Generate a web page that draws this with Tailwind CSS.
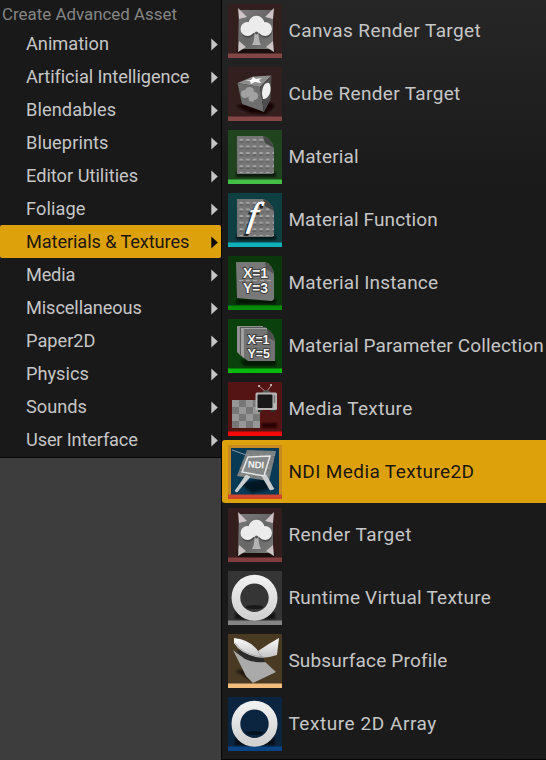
<!DOCTYPE html>
<html lang="en">
<head>
<meta charset="utf-8">
<title>Create Advanced Asset</title>
<script src="https://cdn.jsdelivr.net/npm/@tailwindcss/browser@4"></script>
</head>
<body class="w-[546px] h-[760px] overflow-hidden bg-[#3d3d3d] font-['Roboto',sans-serif] text-[#c6c6c6]">
<svg class="absolute w-0 h-0">
  <defs>
    <linearGradient id="stone" x1="0" y1="0" x2="1" y2="1"><stop offset="0" stop-color="#7c7c7c"/><stop offset=".5" stop-color="#666"/><stop offset="1" stop-color="#7a7a7a"/></linearGradient>
    <linearGradient id="ringFill" x1="0" y1="0" x2="0" y2="1"><stop offset="0" stop-color="#f0f0f0"/><stop offset="1" stop-color="#d2d2d2"/></linearGradient>
    <linearGradient id="white" x1="0" y1="0" x2="0" y2="1"><stop offset="0" stop-color="#fafafa"/><stop offset="1" stop-color="#c4c4c4"/></linearGradient>
    <pattern id="dots" width="6.600" height="6.600" patternUnits="userSpaceOnUse" x="10" y="7"><rect x="1.500" y="2" width="3.600" height="2" fill="#a8a8a8"/><rect x="1.500" y="4" width="3.600" height="1.500" fill="#5c5c5c"/></pattern>
    <pattern id="checks" width="14" height="14" patternUnits="userSpaceOnUse" x="4" y="18"><rect width="14" height="14" fill="#969696"/><path d="M7 0h7v7H7zM0 7h7v7H0z" fill="#777"/></pattern>
    <filter id="soft" x="-20%" y="-20%" width="140%" height="140%"><feGaussianBlur stdDeviation="1.3"/></filter>
    <filter id="fine" x="-10%" y="-10%" width="120%" height="120%"><feGaussianBlur stdDeviation=".4"/></filter>
  </defs>
  <symbol id="tree" viewBox="0 0 54 54">
    <path d="M10 44h36v6H10z" fill="#150808" filter="url(#soft)"/>
    <path d="M11 6H45V43L43 45H12L10 43z" fill="url(#stone)"/>
    <g filter="url(#fine)"><path d="M10 4l9 9-8 2zM46 4l-9 9 8 2zM10 48l8-5-7-6zM46 48l-8-5 7-6z" fill="#cdc5c5"/>
    <g fill="#4c4c4c" transform="translate(.5 1.800)"><circle cx="19.500" cy="25" r="7"/><circle cx="28.500" cy="19.500" r="7.800"/><circle cx="37" cy="25" r="7"/><path d="M20 22h17v7H20z"/></g>
    <g fill="#ececec"><circle cx="19.500" cy="25" r="7"/><circle cx="28.500" cy="19.500" r="7.800"/><circle cx="37" cy="25" r="7"/><path d="M20 22h17v7H20z"/></g>
    <path d="M26.500 28h4q0 9 2.500 13h-9q2.500-4 2.500-13z" fill="#b4b4b4"/></g>
    <circle cx="28.500" cy="29" r="1.500" fill="#555"/>
  </symbol>
  <symbol id="cube" viewBox="0 0 54 54">
    <path d="M8 39L36 32 47 39 38 47 22 46z" fill="#120606" filter="url(#soft)"/>
    <path d="M9.500 16L25 9.500 43.500 8.500 32 20z" fill="#8e8e8e"/>
    <path d="M9.500 16L32 20 36 45 14 37z" fill="#6e6e6e"/>
    <path d="M32 20L43.500 8.500 42.500 33 36 45z" fill="#4e4e4e"/>
    <path d="M17 14l6-1 2-3 3 2 6-1-3 2 2 3-6-1-4 2-1-3z" fill="#fff" filter="url(#fine)"/>
    <g fill="#a2a2a2" filter="url(#fine)"><circle cx="17" cy="27" r="4"/><circle cx="21.500" cy="24.500" r="4.500"/><circle cx="26" cy="29" r="4"/><path d="M20 27h4l2 8-5-1z"/></g>
    <path d="M34 27c0-7 3-12 7-11 4 6 0 17-6 16z" fill="#f0f0f0" filter="url(#fine)"/>
  </symbol>
  <symbol id="sheet" viewBox="0 0 54 54">
    <path d="M8 42h40v5H8z" fill="#000" opacity=".6" filter="url(#soft)"/>
    <path d="M9 6H35Q43 8 46 18V43L44 44H9z" fill="#767676"/>
    <path d="M10 7H34L46 19V43H10z" fill="url(#dots)"/>
    <path d="M35 6l2 7 9 5q-3-10-11-12z" fill="#454845"/>
  </symbol>
  <symbol id="plain" viewBox="0 0 54 54">
    <path d="M8 43h40v5H8z" fill="#000" opacity=".6" filter="url(#soft)"/>
    <path d="M8 6H37Q44 8 46 18V43L44 45 9 42z" fill="#787878"/>
    <path d="M37 6l1 7 8 5q-2-10-9-12z" fill="#535353"/>
    <path d="M11 24.500h33" stroke="#a5a5a5" stroke-dasharray="4 3"/>
  </symbol>
  <symbol id="stack" viewBox="0 0 54 54">
    <path d="M12 41h36v6H16z" fill="#000" opacity=".6" filter="url(#soft)"/>
    <path d="M9 7h26v30H13l-4-4z" fill="#909090"/><path d="M12 8h26v31H15l-3-3z" fill="#5c5c5c"/><path d="M13 9h26v30H16l-3-3z" fill="#a0a0a0"/>
    <path d="M16 10h23q7 4 8 12v20H20l-4-3z" fill="#727272"/><path d="M39 10l1 9 7 3q-2-9-8-12z" fill="#505050"/>
  </symbol>
  <symbol id="tv" viewBox="0 0 54 54">
    <path d="M34 41h15v5H34z" fill="#250303" filter="url(#soft)"/>
    <path d="M4 18h28v28H4z" fill="url(#checks)"/>
    <path d="M38 10L31 4M38 10l5-6" stroke="#b88" stroke-width="1"/><circle cx="31" cy="4" r="1" fill="#ddd"/><circle cx="43" cy="3" r="1" fill="#ddd"/>
    <path d="M34 11c1-4 8-4 9 0z" fill="#555"/>
    <rect x="27.500" y="10.500" width="21.500" height="17.500" rx="1.500" fill="#b4b4b4"/><rect x="29.500" y="12.500" width="15" height="13.500" rx="1" fill="#181818"/>
    <path d="M46.500 13v8" stroke="#777" stroke-width="1.500"/><path d="M30 28h4v2h-4zM43 28h4v2h-4z" fill="#333"/>
  </symbol>
  <symbol id="ndi" viewBox="0 0 54 54">
    <path d="M3 3H51V50H3z" fill="#083a56"/>
    <path d="M11 38L36 34 47 43 24 48z" fill="#001524" filter="url(#soft)"/>
    <path d="M4 5l17 6" stroke="#8a9ba5"/>
    <path d="M19 5L48 6 41 36 9 31z" fill="#7c8080"/>
    <path d="M19 5L48 6 41 36 9 31z" fill="url(#dots)" opacity=".3"/>
    <path d="M20 12L42 11 36 31 14 27z" fill="#858989" stroke="#e6e6e6" stroke-width="1.500"/>
    <path d="M18 30L7 46l2 1 13-15zM34 31l8 14 4-1-8-14z" fill="#c9cdcf" stroke="#e4e8e8" stroke-width=".6"/>
  </symbol>
  <symbol id="ring" viewBox="0 0 54 54">
    <path d="M7 41q20 10 40 0v7H7z" fill="#000" opacity=".65" filter="url(#soft)"/>
    <ellipse cx="26.500" cy="36" rx="9" ry="2" fill="#000" opacity=".5" filter="url(#fine)"/>
    <circle cx="26.500" cy="26.800" r="18.600" fill="none" stroke="url(#ringFill)" stroke-width="8.800"/>
  </symbol>
  <symbol id="profile" viewBox="0 0 54 54">
    <path d="M7 37l17 10-7-12z" fill="#15100a" opacity=".8" filter="url(#soft)"/>
    <path d="M5 16q10 10 31 11L48 38 25 49 18 42z" fill="#aaa"/>
    <path d="M8 16q8 14 29 12L34 21z" fill="#292929" filter="url(#fine)"/>
    <path d="M6 4q17 2 24 13 10-7 21-13l-2 17q-12 4-21 2Q12 19 6 9z" fill="url(#white)"/>
    <path d="M7 9q8 12 28 14-4-2-5-6" fill="none" stroke="#999" stroke-width=".7"/>
  </symbol>
  <symbol id="arrow" viewBox="0 0 7 13"><path d="M.3.500L6.800 6.500.3 12.500z" fill="currentColor"/></symbol>
</svg>
<div class="flex items-start h-[760px]">
  <nav class="w-[221px] h-[458px] shrink-0 bg-[#191919] border-b border-[#050505]">
    <h1 class="h-[27px] pl-[2px] leading-[29px] text-[16.9px] text-[#858585] whitespace-nowrap">Create Advanced Asset</h1>
    <ul class="text-[18.2px] leading-[33px] whitespace-nowrap [&>li]:flex [&>li]:items-center [&>li]:justify-between [&>li]:h-[33px] [&>li]:pl-[26px] [&>li]:pr-[3px] [&_svg]:w-[7px] [&_svg]:h-[13px] [&_svg]:mt-px">
      <li><span>Animation</span><svg><use href="#arrow"/></svg></li>
      <li><span class="tracking-[-0.08px]">Artificial Intelligence</span><svg><use href="#arrow"/></svg></li>
      <li><span class="tracking-[0.1px]">Blendables</span><svg><use href="#arrow"/></svg></li>
      <li><span class="tracking-[0.1px]">Blueprints</span><svg><use href="#arrow"/></svg></li>
      <li><span>Editor Utilities</span><svg><use href="#arrow"/></svg></li>
      <li><span class="tracking-[0.1px]">Foliage</span><svg><use href="#arrow"/></svg></li>
      <li class="bg-[#dda20b] text-[#1c1607] rounded-[2px]"><span class="tracking-[-0.1px]">Materials &amp; Textures</span><svg class="text-[#0c0900]"><use href="#arrow"/></svg></li>
      <li><span class="tracking-[-0.2px]">Media</span><svg><use href="#arrow"/></svg></li>
      <li><span class="tracking-[-0.1px]">Miscellaneous</span><svg><use href="#arrow"/></svg></li>
      <li><span>Paper2D</span><svg><use href="#arrow"/></svg></li>
      <li><span>Physics</span><svg><use href="#arrow"/></svg></li>
      <li><span>Sounds</span><svg><use href="#arrow"/></svg></li>
      <li><span class="tracking-[-0.15px]">User Interface</span><svg><use href="#arrow"/></svg></li>
    </ul>
  </nav>
  <main class="w-[325px] h-[760px] overflow-hidden border-l border-b border-[#050505] bg-linear-to-b from-[#262626] via-[#1a1a1a] via-25% to-[#1a1a1a]">
    <ul class="-mt-px whitespace-nowrap text-[19px] leading-[24px] [&>li]:flex [&>li]:items-center [&>li]:gap-[6px] [&>li]:h-[63px] [&>li]:pl-[6px] [&_svg]:w-[54px] [&_svg]:h-[54px] [&_svg]:shrink-0 [&_svg]:mt-px [&_span]:pl-[0.4px]">
      <li><svg viewBox="0 0 54 54" class="bg-[#341f1f] text-[#844545]"><use href="#tree"/><path d="M0 49.500h54V54H0z" fill="currentColor"/></svg><span class="tracking-[0.4px]">Canvas Render Target</span></li>
      <li><svg viewBox="0 0 54 54" class="bg-[#341f1f] text-[#844545]"><use href="#cube"/><path d="M0 49.500h54V54H0z" fill="currentColor"/></svg><span class="tracking-[0.35px]">Cube Render Target</span></li>
      <li><svg viewBox="0 0 54 54" class="bg-[#1f441e] text-[#43bf43]"><use href="#sheet"/><path d="M0 49.500h54V54H0z" fill="currentColor"/></svg><span class="tracking-[0.15px]">Material</span></li>
      <li><svg viewBox="0 0 54 54" class="bg-[#0d3f43] text-[#0fb0b8]"><use href="#sheet"/><path d="M0 49.500h54V54H0z" fill="currentColor"/><g transform="translate(19 33) skewX(-9)" font-size="34" font-style="italic" class="font-['Liberation_Serif',serif]"><text x="-1" y="1.500" fill="#222" stroke="#222" stroke-width="2" filter="url(#fine)">f</text><text fill="#fff" stroke="#fff" stroke-width=".9">f</text></g></svg><span class="tracking-[0.13px]">Material Function</span></li>
      <li><svg viewBox="0 0 54 54" class="bg-[#0a370b] text-[#058c05]"><use href="#plain"/><path d="M0 49.500h54V54H0z" fill="currentColor"/><g class="font-['Liberation_Sans',sans-serif]" font-weight="bold" font-size="14" fill="#f4f4f4" stroke="#333" stroke-width="1.600" paint-order="stroke"><text x="15" y="22" textLength="25">X=1</text><text x="15" y="37" textLength="25">Y=3</text></g></svg><span class="tracking-[0.2px]">Material Instance</span></li>
      <li><svg viewBox="0 0 54 54" class="bg-[#0a400b] text-[#06b90a]"><use href="#stack"/><path d="M0 49.500h54V54H0z" fill="currentColor"/><g class="font-['Liberation_Sans',sans-serif]" font-weight="bold" font-size="12.500" fill="#f4f4f4" stroke="#333" stroke-width="1.600" paint-order="stroke"><text x="19.500" y="24.500" textLength="22">X=1</text><text x="19.500" y="39" textLength="22.500">Y=5</text></g></svg><span class="tracking-[0.14px]">Material Parameter Collection</span></li>
      <li><svg viewBox="0 0 54 54" class="bg-[#541414] text-[#f20a0a]"><use href="#tv"/><path d="M0 49.500h54V54H0z" fill="currentColor"/></svg><span class="tracking-[0.35px]">Media Texture</span></li>
      <li class="bg-[#dda20b] text-[#1c1607] rounded-l-[3px]"><svg viewBox="0 0 54 54" class="bg-[#c78a20] text-[#cf452e]"><use href="#ndi"/><path d="M0 49.500h54V54H0z" fill="currentColor"/><text x="20" y="23" font-size="9.500" font-weight="bold" textLength="16" transform="rotate(3 28 20)" class="font-['Liberation_Sans',sans-serif]" fill="#f4f4f4">NDI</text></svg><span class="tracking-[0.39px]">NDI Media Texture2D</span></li>
      <li><svg viewBox="0 0 54 54" class="bg-[#341d1d] text-[#843d3d]"><use href="#tree"/><path d="M0 49.500h54V54H0z" fill="currentColor"/></svg><span class="tracking-[0.45px]">Render Target</span></li>
      <li><svg viewBox="0 0 54 54" class="bg-[#353535] text-[#858585]"><path d="M0 49.500h54V54H0z" fill="currentColor"/><use href="#ring"/></svg><span class="tracking-[0.22px]">Runtime Virtual Texture</span></li>
      <li><svg viewBox="0 0 54 54" class="bg-[#4a3a24] text-[#f3bd7d]"><use href="#profile"/><path d="M0 49.500h54V54H0z" fill="currentColor"/></svg><span class="tracking-[0.18px]">Subsurface Profile</span></li>
      <li><svg viewBox="0 0 54 54" class="bg-[#0b2540] text-[#0a4485]"><path d="M0 49.500h54V54H0z" fill="currentColor"/><use href="#ring"/></svg><span class="tracking-[0.55px]">Texture 2D Array</span></li>
    </ul>
  </main>
</div>
</body>
</html>
